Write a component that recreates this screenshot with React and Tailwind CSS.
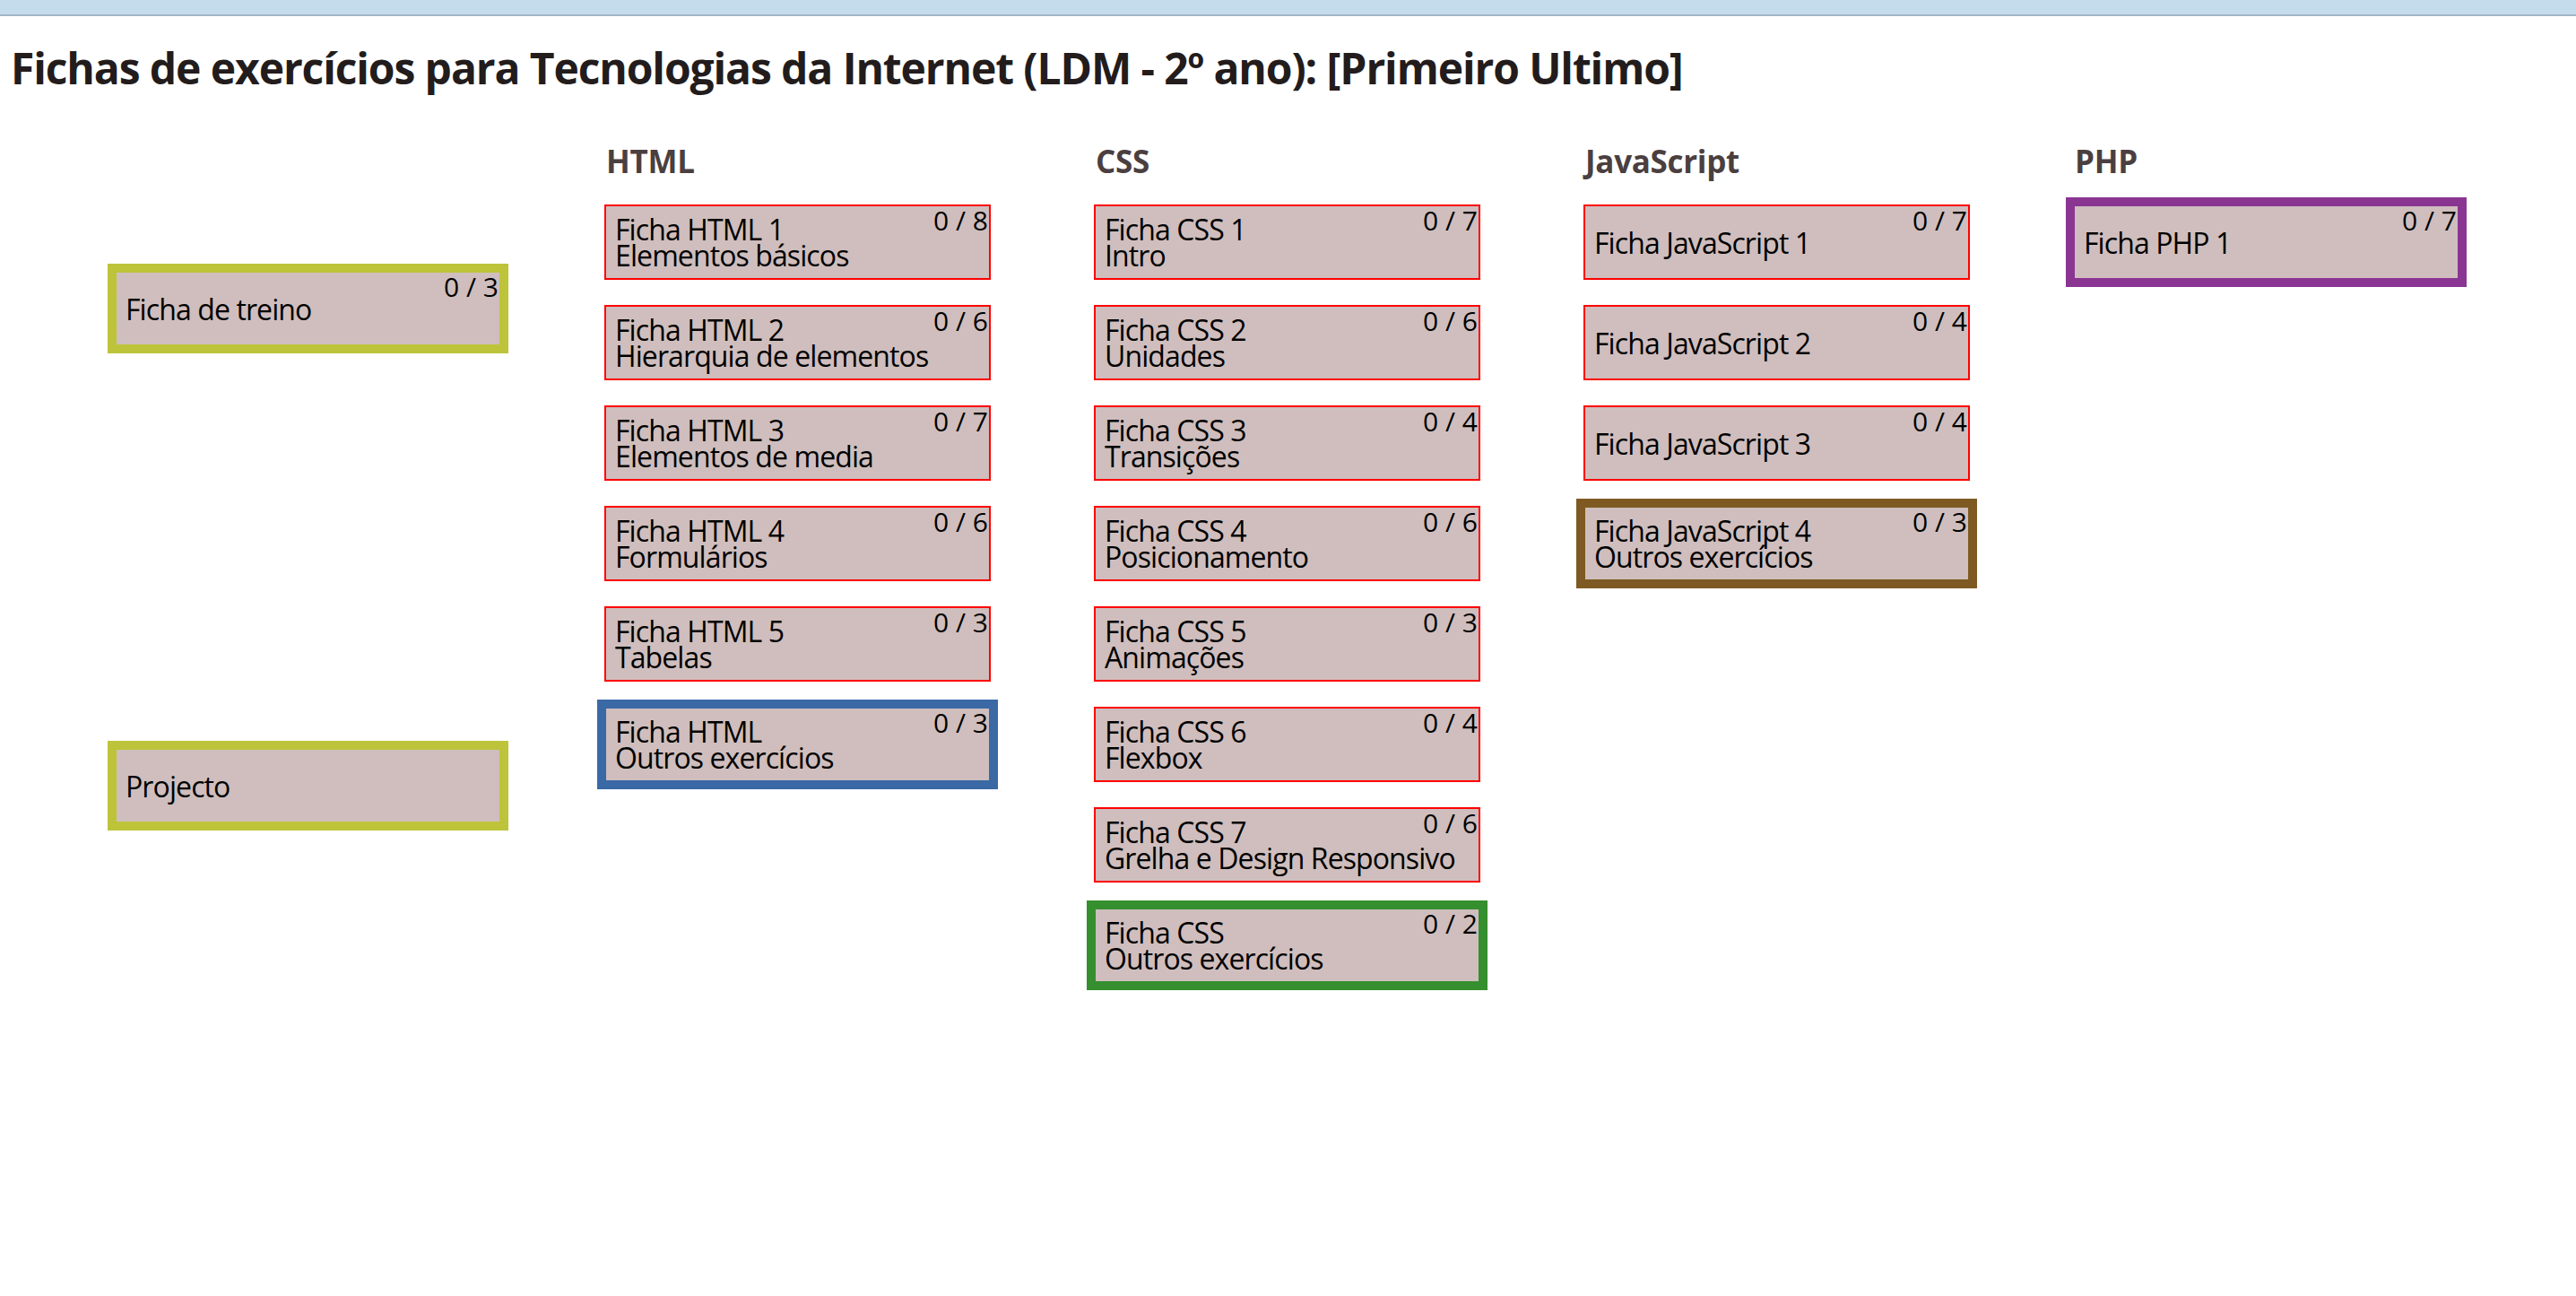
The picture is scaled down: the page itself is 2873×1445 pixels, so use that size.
const columns = [
  {
    title: "HTML",
    items: [
      { name: "Ficha HTML 1", sub: "Elementos básicos", count: "0 / 8" },
      { name: "Ficha HTML 2", sub: "Hierarquia de elementos", count: "0 / 6" },
      { name: "Ficha HTML 3", sub: "Elementos de media", count: "0 / 7" },
      { name: "Ficha HTML 4", sub: "Formulários", count: "0 / 6" },
      { name: "Ficha HTML 5", sub: "Tabelas", count: "0 / 3" },
      { name: "Ficha HTML", sub: "Outros exercícios", count: "0 / 3", accent: "border-[#3a69a6]" },
    ],
  },
  {
    title: "CSS",
    items: [
      { name: "Ficha CSS 1", sub: "Intro", count: "0 / 7" },
      { name: "Ficha CSS 2", sub: "Unidades", count: "0 / 6" },
      { name: "Ficha CSS 3", sub: "Transições", count: "0 / 4" },
      { name: "Ficha CSS 4", sub: "Posicionamento", count: "0 / 6" },
      { name: "Ficha CSS 5", sub: "Animações", count: "0 / 3" },
      { name: "Ficha CSS 6", sub: "Flexbox", count: "0 / 4" },
      { name: "Ficha CSS 7", sub: "Grelha e Design Responsivo", count: "0 / 6" },
      { name: "Ficha CSS", sub: "Outros exercícios", count: "0 / 2", accent: "border-[#358f2f]" },
    ],
  },
  {
    title: "JavaScript",
    items: [
      { name: "Ficha JavaScript 1", count: "0 / 7" },
      { name: "Ficha JavaScript 2", count: "0 / 4" },
      { name: "Ficha JavaScript 3", count: "0 / 4" },
      { name: "Ficha JavaScript 4", sub: "Outros exercícios", count: "0 / 3", accent: "border-[#7e5a22]" },
    ],
  },
  {
    title: "PHP",
    items: [{ name: "Ficha PHP 1", count: "0 / 7", accent: "border-[#8b3592]" }],
  },
];

const FichaBox = ({ name, sub, count, accent }) => {
  // accented boxes grow their border outward so the inner area stays aligned
  const border = accent ? `border-[10px] -m-[8px] ${accent}` : "border-2 border-[#ff0000]";

  return (
    <div className={border}>
      <div className="relative flex h-[80px] w-[427px] items-center bg-[#cfbebd] pl-[10px]">
        <div className="text-[32px] leading-[29px] tracking-[-0.9px] text-black">
          <div>{name}</div>
          {sub && <div>{sub}</div>}
        </div>
        {count && (
          <span className="absolute right-[1px] top-[1px] text-[30px] leading-none text-black">
            {count}
          </span>
        )}
      </div>
    </div>
  );
};

const App = () => {
  return (
    <div className="min-h-screen bg-white font-['Open_Sans',sans-serif]">
      <div className="h-[18px] border-b-2 border-[#a2b5c5] bg-[#c5dcec]" />

      <h1 className="ml-[12px] mt-[34px] text-[48px] font-bold leading-none tracking-[-1.1px] text-[#231c1c]">
        Fichas de exercícios para Tecnologias da Internet (LDM - 2º ano): [Primeiro Ultimo]
      </h1>

      <div className="mt-[62px] flex gap-[115px] pl-[128px]">
        <div className="flex w-[431px] flex-col">
          <div className="mt-[140px]">
            <FichaBox name="Ficha de treino" count="0 / 3" accent="border-[#bdc43a]" />
          </div>
          <div className="mt-[448px]">
            <FichaBox name="Projecto" accent="border-[#bdc43a]" />
          </div>
        </div>

        {columns.map((col) => (
          <div key={col.title} className="flex w-[431px] flex-col">
            <h2 className="pl-[2px] text-[35px] font-bold leading-none tracking-[-0.3px] text-[#4b3f3f]">
              {col.title}
            </h2>
            <div className="mt-[31px] flex flex-col gap-[28px]">
              {col.items.map((item) => (
                <FichaBox key={item.name + (item.sub || "")} {...item} />
              ))}
            </div>
          </div>
        ))}
      </div>
    </div>
  );
};

export default App;
